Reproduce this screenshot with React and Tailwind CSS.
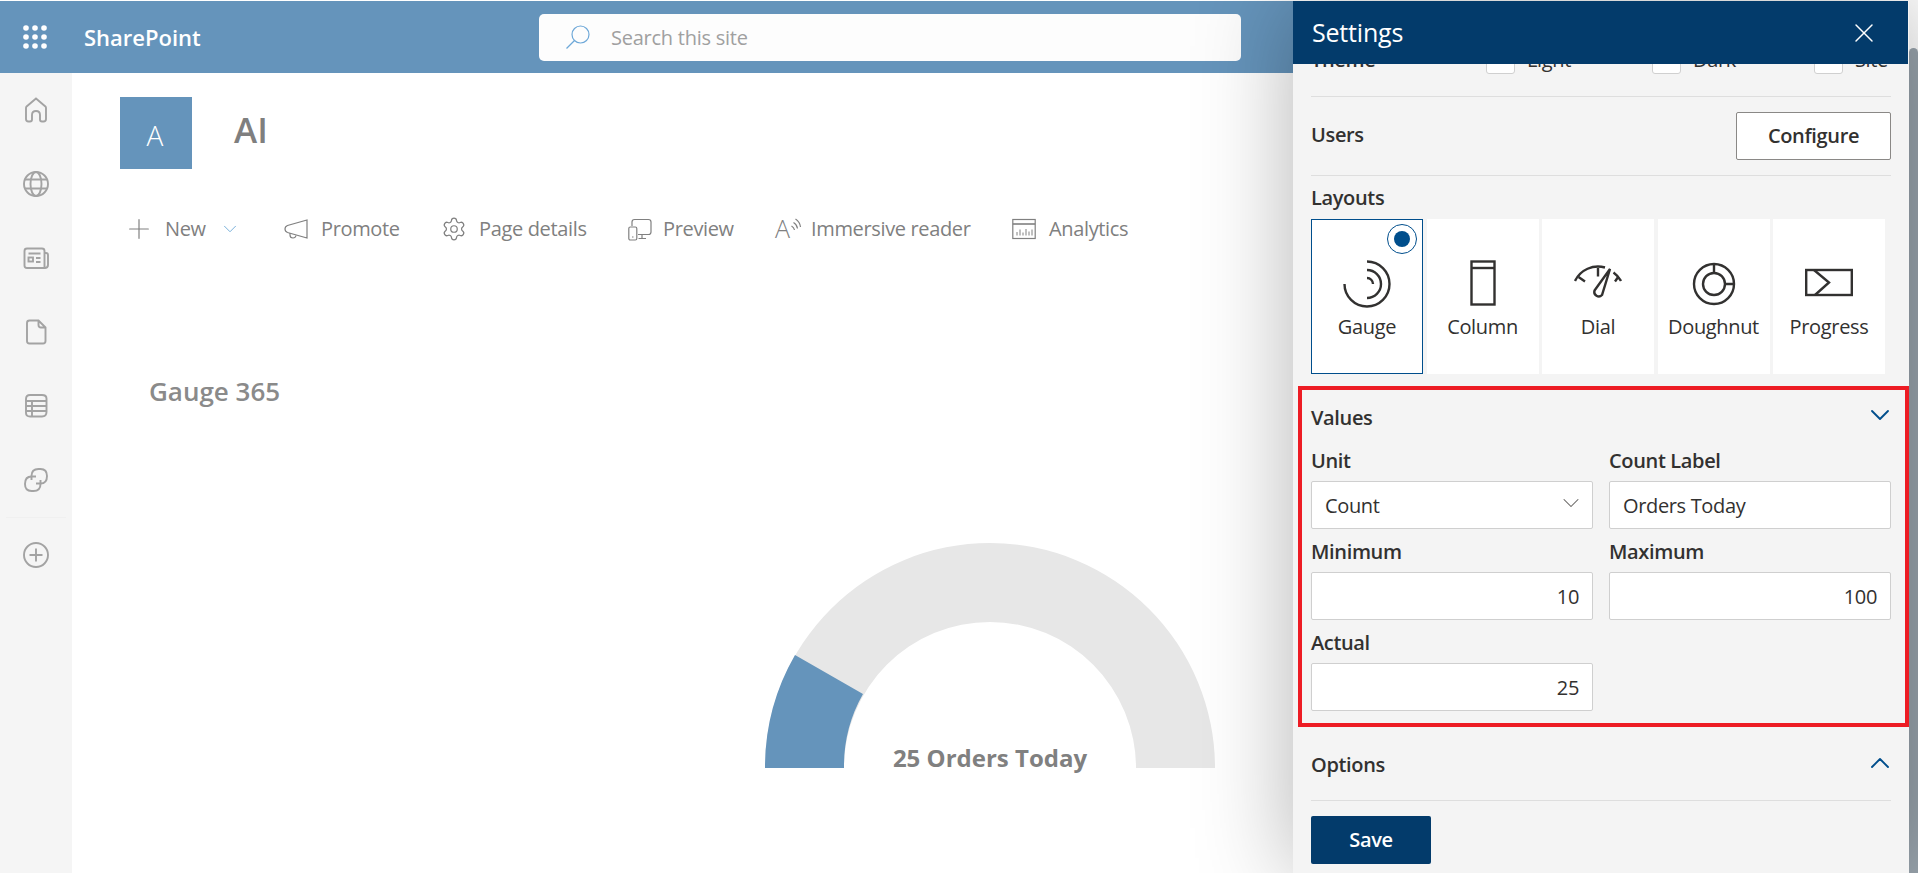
import { Settings as Gear, X, ChevronDown, ChevronUp, Plus } from "lucide-react";

// left rail icons, all on a 28 box
const RAIL_ICONS = [
  <path key="home" d="M14 2.5 L4.6 10.4 Q4 11 4 12 V23 Q4 25.5 6.5 25.5 H8 Q10 25.5 10 23.5 V19 Q10 15 14 15 Q18 15 18 19 V23.5 Q18 25.5 20 25.5 H21.5 Q24 25.5 24 23 V12 Q24 11 23.4 10.4 Z" />,
  <g key="globe">
    <circle cx="14" cy="14" r="12" />
    <ellipse cx="14" cy="14" rx="5.5" ry="12" />
    <path d="M3 9.5 H25 M3 18.5 H25" />
  </g>,
  <g key="news">
    <path d="M2.5 7 Q2.5 4.5 5 4.5 H20 Q22.5 4.5 22.5 7 V24 H5 Q2.5 24 2.5 21.5 Z" />
    <path d="M22.5 9 H24 Q26 9 26 11 V21 Q26 24 22.5 24" />
    <rect x="6.5" y="13.5" width="4.5" height="4" />
    <path d="M6.5 9.5 H18.5 M14 14 H18.5 M14 18 H18.5" />
  </g>,
  <path key="doc" d="M5 5 Q5 2.5 7.5 2.5 H16.5 L23.5 9.5 V23 Q23.5 25.5 21 25.5 H7.5 Q5 25.5 5 23 Z M16.5 2.5 V7 Q16.5 9.5 19 9.5 H23.5" />,
  <g key="list">
    <path d="M4 7 Q4 3 8 3 H20 Q24.5 3 24.5 6.5 V20 Q24.5 24.5 20 24.5 H8 Q4 24.5 4 21 Z" />
    <path d="M4 9 H24.5 M4 14 H24.5 M4 19 H24.5 M10 9 V24.5" />
  </g>,
  <g key="link">
    <path d="M9.5 14 V10 Q9.5 3 16.5 3 H18.5 Q25 3 25 10 Q25 17.5 18.5 17.5 H14" />
    <path d="M18.5 14 V18 Q18.5 25 11.5 25 H9.5 Q3 25 3 18 Q3 10.5 9.5 10.5 H14" />
  </g>,
];

function RailIcon({ children }) {
  return (
    <svg viewBox="0 0 28 28" className="w-7 h-7" fill="none" stroke="#a3a3a3" strokeWidth="1.9">
      {children}
    </svg>
  );
}

function ToolIcon({ children }) {
  return (
    <svg viewBox="0 0 24 24" className="w-6 h-6 shrink-0 overflow-visible" fill="none" stroke="#808080" strokeWidth="1.2">
      {children}
    </svg>
  );
}

const TOOLBAR = [
  {
    label: "Promote",
    width: "w-[158px]",
    gap: "gap-[13px]",
    icon: (
      <ToolIcon>
        <path d="M23 3 V21 L3.5 15.5 Q1 14.5 1 12 Q1 9.5 3.5 8.5 Z" />
        <path d="M6 16 V18 Q6 21 9 21 Q11.5 21 12 18.5" />
      </ToolIcon>
    ),
  },
  {
    label: "Page details",
    width: "w-[186px]",
    gap: "gap-[12px]",
    icon: <Gear className="w-[26px] h-[26px] -ml-px shrink-0 text-[#808080]" strokeWidth={1.15} />,
  },
  {
    label: "Preview",
    width: "w-[148px]",
    gap: "gap-[11px]",
    icon: (
      <ToolIcon>
        <path d="M4 9 V5 Q4 2.5 6.5 2.5 H20.5 Q23 2.5 23 5 V15 Q23 17.5 20.5 17.5 H10" />
        <path d="M14 17.5 V21 M10.5 21.5 H18" />
        <rect x="0.8" y="10" width="8" height="13" rx="1.5" />
        <path d="M4 20 H5.5" />
      </ToolIcon>
    ),
  },
  {
    label: "Immersive reader",
    width: "w-[236px]",
    gap: "gap-[11px]",
    icon: (
      <ToolIcon>
        <text x="-1" y="21" fontSize="25" fill="#808080" stroke="none" fontFamily="'Open Sans', sans-serif" fontWeight="300">A</text>
        <path d="M15.5 9 Q18 10.5 18.5 13 M17.5 5.5 Q21 7.5 21.5 11.5 M19.5 2 Q24 5 24.5 10" />
      </ToolIcon>
    ),
  },
  {
    label: "Analytics",
    width: "",
    gap: "gap-[13px]",
    icon: (
      <ToolIcon>
        <rect x="0.8" y="2.5" width="22.4" height="19" />
        <path d="M0.8 7 H23.2" strokeWidth="1.6" />
        <path d="M5 18.5 V15 M8 18.5 V12.5 M11 18.5 V15.5 M14 18.5 V12 M17 18.5 V14.5 M20 18.5 V12.5" strokeWidth="1" />
      </ToolIcon>
    ),
  },
];

const LAYOUTS = [
  {
    label: "Gauge",
    icon: (
      <>
        <path d="M1.5 24 A22.5 22.5 0 1 0 24 1.5" />
        <path d="M24 10 A14 14 0 0 1 24 38" />
        <path d="M24 18 A6 6 0 0 1 30 24" />
      </>
    ),
  },
  {
    label: "Column",
    icon: (
      <>
        <rect x="12.5" y="1.5" width="23" height="43" />
        <path d="M12.5 8 H35.5" />
      </>
    ),
  },
  {
    label: "Dial",
    icon: (
      <>
        <path d="M1 21 A25.5 25.5 0 0 1 31 7.5" />
        <path d="M39.5 12.5 A25.5 25.5 0 0 1 47 21" />
        <path d="M4.5 17 L11 21.5 M24 8 V16.5 M41 21.5 L44.5 16.5" />
        <path d="M36 9 L20.5 30.5 A4.5 4.5 0 0 0 28 35 Z" />
      </>
    ),
  },
  {
    label: "Doughnut",
    icon: (
      <>
        <circle cx="24" cy="24" r="20" />
        <circle cx="24" cy="24" r="11" />
        <path d="M24 4 V13 M35 24 H44" />
      </>
    ),
  },
  {
    label: "Progress",
    icon: (
      <>
        <rect x="1.2" y="10" width="45.6" height="25" />
        <path d="M9 10 L24 22.5 L10 35" />
      </>
    ),
  },
];

function Field({ label, value, select, right }) {
  return (
    <div>
      <div className="h-6 leading-6 font-semibold text-[20px] tracking-[-0.35px] text-[#323130]">{label}</div>
      <div
        className={`mt-2 h-12 bg-white border border-[#cfcfcf] rounded-[2px] flex items-center text-[20px] tracking-[-0.35px] text-[#323130] ${
          right ? "justify-end pr-[13px]" : "justify-between pl-[13px] pr-[13px]"
        }`}
      >
        <span className="pt-[2px]">{value}</span>
        {select && <ChevronDown className="w-[28px] h-[28px] -mr-[6px] -mt-[4px] text-[#605e5c]" strokeWidth={0.9} />}
      </div>
    </div>
  );
}

function ThemeOption({ label, checked, width }) {
  return (
    <div className={`h-[28px] flex items-center gap-[12px] ${width}`}>
      <div className="w-[29px] h-[28px] bg-white border border-[#d0d0d0] rounded-[3px] flex items-center justify-center">
        {checked && (
          <svg viewBox="0 0 12 12" className="w-3 h-3 -mt-3" fill="none" stroke="#004e8c" strokeWidth="1.5">
            <path d="M2 6 L5 9 L10 3" />
          </svg>
        )}
      </div>
      <span className="text-[20px] tracking-[-0.35px] text-[#323130]">{label}</span>
    </div>
  );
}

export default function App() {
  return (
    <div className="relative h-[873px] overflow-hidden bg-white pt-px font-['Open_Sans','Noto_Sans',sans-serif]">
      {/* suite bar */}
      <header className="h-[72px] bg-[#6594bb] flex items-center">
        <div className="w-[84px] pl-[23px]">
          <svg viewBox="0 0 24 24" className="w-6 h-6" fill="#fff">
            {[3, 12, 21].map((cy) =>
              [3, 12, 21].map((cx) => <circle key={`${cx}-${cy}`} cx={cx} cy={cy} r="2.8" />)
            )}
          </svg>
        </div>
        <div className="w-[455px] pt-px text-white font-semibold text-[22px]">SharePoint</div>
        <div className="w-[702px] h-[47px] bg-[#fdfdfd] rounded-[5px] flex items-center pl-[27px] gap-[21px]">
          <svg viewBox="0 0 24 24" className="w-6 h-6" fill="none" stroke="#6ea8d8" strokeWidth="1.2">
            <circle cx="14.5" cy="9.5" r="8.5" />
            <path d="M8.5 15.5 L0.5 23.5" />
          </svg>
          <span className="pt-[2px] text-[20px] tracking-[-0.25px] text-[#a0a0a0]">Search this site</span>
        </div>
      </header>

      <div className="flex h-[800px]">
        {/* left rail */}
        <nav className="w-[72px] bg-[#f5f5f5] flex flex-col items-center pt-[23px] gap-[46px]">
          {RAIL_ICONS.map((icon, i) => (
            <RailIcon key={i}>{icon}</RailIcon>
          ))}
          <div className="w-[60px] h-px bg-[#f0f0f0] -my-[23px]" />
          <RailIcon>
            <circle cx="14" cy="14" r="12" />
            <path d="M14 7.5 V20.5 M7.5 14 H20.5" />
          </RailIcon>
        </nav>

        {/* page */}
        <main className="flex-1 pl-[48px] pt-[24px]">
          <div className="flex gap-[42px]">
            <div className="w-[72px] h-[72px] bg-[#6594bb] flex items-center justify-center text-white text-[28px] font-light pt-[4px] pr-[2px]">
              A
            </div>
            <div className="text-[#7f7f7f] text-[35px] font-semibold leading-[66px] h-[66px]">AI</div>
          </div>

          <div className="flex items-center h-[32px] mt-[44px] pl-[10px] text-[#808080] text-[20px] tracking-[-0.35px]">
            <div className="flex items-center w-[154px]">
              <Plus className="w-[32px] h-[32px] shrink-0 text-[#808080] -ml-[7px]" strokeWidth={0.9} />
              <span className="ml-[10px]">New</span>
              <ChevronDown className="w-[22px] h-[22px] shrink-0 text-[#6ca9d6] ml-[13px]" strokeWidth={1} />
            </div>
            {TOOLBAR.map((item) => (
              <div key={item.label} className={`flex items-center ${item.width} ${item.gap}`}>
                {item.icon}
                <span>{item.label}</span>
              </div>
            ))}
          </div>

          <div className="h-[32px] leading-[32px] mt-[130px] ml-[29px] text-[26px] font-semibold text-[#8a8a8a]">
            Gauge 365
          </div>

          <div className="relative w-[450px] h-[225px] ml-[645px] mt-[136px]">
            <svg viewBox="0 0 450 225" className="block w-full h-full">
              <path d="M0 225 A225 225 0 0 1 450 225 H371 A146 146 0 0 0 79 225 Z" fill="#e7e7e7" />
              <path d="M0 225 A225 225 0 0 1 30 112 L98 151 A146 146 0 0 0 79 225 Z" fill="#6594bb" />
            </svg>
            <div className="absolute inset-x-0 -bottom-[8px] text-center text-[24px] font-bold text-[#808080]">
              25 Orders Today
            </div>
          </div>
        </main>
      </div>

      {/* settings panel */}
      <aside className="absolute top-px right-0 bottom-0 w-[625px] flex">
        <div className="w-[616px] bg-[#f4f4f4] shadow-[0_0_90px_rgba(0,0,0,0.3)] relative flex flex-col">
          <div className="w-[615px] h-[63px] bg-[#033b6b] shrink-0 flex items-center justify-between pl-[19px] pr-[28px] text-white relative z-10">
            <span className="text-[25px] tracking-[-0.2px]">Settings</span>
            <X className="w-[32px] h-[32px]" strokeWidth={1.1} />
          </div>

          <div className="flex-1 overflow-hidden">
            <div className="-mt-[30px] pl-[18px]">
              <div className="w-[580px] h-[63px] pt-[12px] border-b border-[#dedede] flex">
                <span className="w-[175px] h-[28px] leading-[28px] font-semibold text-[20px] tracking-[-0.35px] text-[#323130]">Theme</span>
                <ThemeOption label="Light" width="w-[166px]" />
                <ThemeOption label="Dark" width="w-[162px]" />
                <ThemeOption label="Site" checked />
              </div>

              <div className="w-[580px] h-[79px] pt-[15px] border-b border-[#dedede] flex justify-between">
                <span className="h-12 leading-[46px] font-semibold text-[20px] tracking-[-0.35px] text-[#323130]">Users</span>
                <button className="w-[155px] h-12 bg-white border border-[#8a8886] rounded-[2px] font-semibold text-[20px] tracking-[-0.35px] text-[#323130]">
                  Configure
                </button>
              </div>

              <div className="h-6 leading-6 mt-[10px] font-semibold text-[20px] tracking-[-0.35px] text-[#323130]">Layouts</div>
              <div className="flex gap-[3.5px] mt-[9px]">
                {LAYOUTS.map((item, i) => (
                  <div
                    key={item.label}
                    className={`relative w-[112px] h-[155px] bg-white flex flex-col items-center ${
                      i === 0 ? "border border-[#004e8c] pt-[40px]" : "pt-[41px]"
                    }`}
                  >
                    {i === 0 && (
                      <div className="absolute top-[4px] right-[5px] w-[30px] h-[30px] rounded-full border border-[#004e8c] bg-white flex items-center justify-center">
                        <div className="w-[16px] h-[16px] rounded-full bg-[#004e8c]" />
                      </div>
                    )}
                    <svg viewBox="0 0 48 48" className="w-12 h-12" fill="none" stroke="#323130" strokeWidth="2.4">
                      {item.icon}
                    </svg>
                    <span className="mt-[7px] h-6 leading-6 text-[20px] tracking-[-0.35px] text-[#323130]">{item.label}</span>
                  </div>
                ))}
              </div>

              {/* values section, outlined in red in the picture */}
              <section className="-ml-[13px] w-[611px] h-[341px] mt-[12px] border-4 border-[#ed1c24] pl-[9px] pr-[14px] pt-[16px]">
                <div className="flex items-center justify-between h-6">
                  <span className="font-semibold text-[20px] tracking-[-0.35px] text-[#323130]">Values</span>
                  <ChevronDown className="w-[32px] h-[32px] text-[#004e8c] -mr-[5px] -mt-[6px]" strokeWidth={1.4} />
                </div>
                <div className="grid grid-cols-2 gap-x-[16px] gap-y-[11px] mt-[19px]">
                  <Field label="Unit" value="Count" select />
                  <Field label="Count Label" value="Orders Today" />
                  <Field label="Minimum" value="10" right />
                  <Field label="Maximum" value="100" right />
                  <Field label="Actual" value="25" right />
                </div>
              </section>

              <div className="w-[580px] h-[48px] mt-[26px] border-b border-[#dedede] flex justify-between">
                <span className="h-6 leading-6 font-semibold text-[20px] tracking-[-0.35px] text-[#323130]">Options</span>
                <ChevronUp className="w-[32px] h-[32px] text-[#004e8c] -mr-[5px] -mt-[6px]" strokeWidth={1.4} />
              </div>

              <button className="w-[120px] h-12 mt-[15px] bg-[#033b6b] rounded-[2px] text-white font-semibold text-[20px] tracking-[-0.35px]">
                Save
              </button>
            </div>
          </div>
        </div>

        {/* scrollbar */}
        <div className="w-[9px] bg-white pt-[47px] flex">
          <div className="w-full bg-[#9aa5ae] rounded-t-full" />
        </div>
      </aside>
    </div>
  );
}
